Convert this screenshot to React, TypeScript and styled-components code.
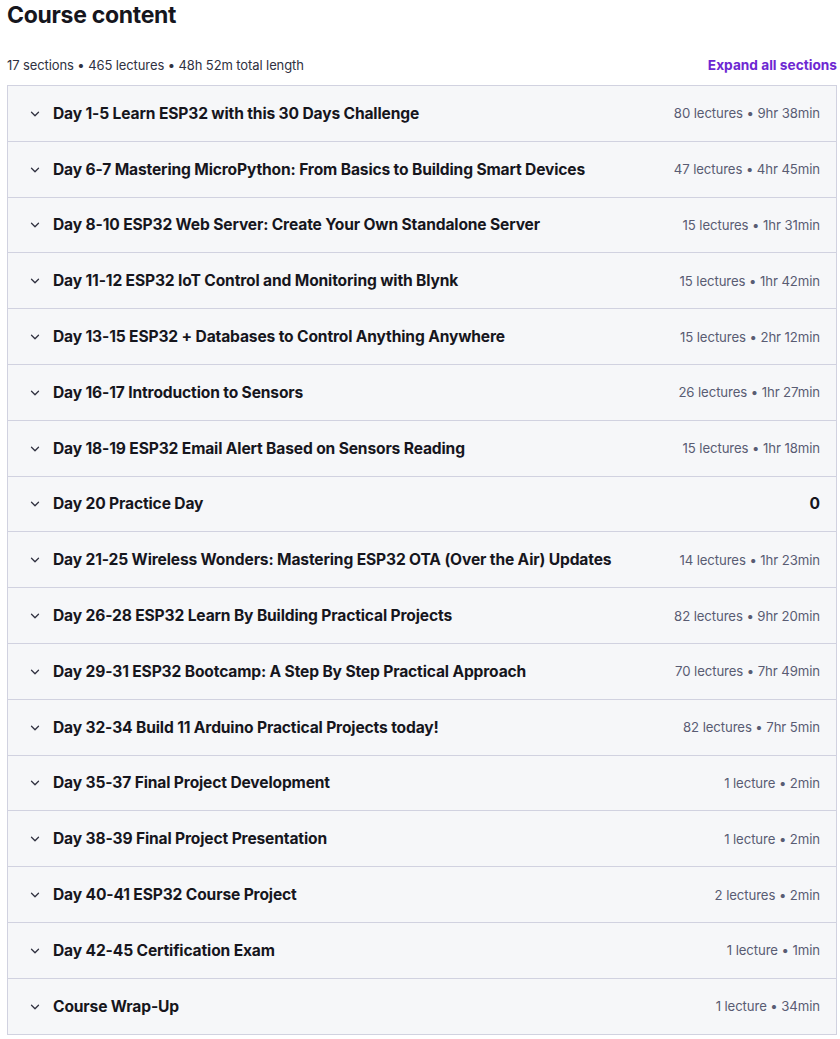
import React from 'react';
import styled, { createGlobalStyle } from 'styled-components';

const GlobalStyle = createGlobalStyle`
  body {
    margin: 0;
    background: #ffffff;
    font-family: Inter, "Noto Sans", sans-serif;
    color: #2a2b3f;
  }
`;

const Page = styled.div`
  padding: 0 3px 0 7px;
`;

const Title = styled.h2`
  margin: 0;
  padding-top: 1px;
  font-size: 23px;
  line-height: 28px;
  font-weight: 700;
  letter-spacing: -0.3px;
  color: #16161d;
`;

const Summary = styled.div`
  display: flex;
  justify-content: space-between;
  align-items: center;
  margin-top: 24px;
  height: 24px;
`;

const Stats = styled.span`
  font-size: 13px;
  color: #303141;
  letter-spacing: -0.1px;
`;

const ExpandAll = styled.button`
  border: 0;
  background: none;
  padding: 0;
  font-family: inherit;
  font-size: 13.7px;
  font-weight: 700;
  color: #6d28d2;
  cursor: pointer;
`;

const Accordion = styled.div`
  margin-top: 8px;
  border: 1px solid #d1d2e0;
  border-bottom: 0;
  width: 828px;
`;

const SectionRow = styled.div`
  display: flex;
  align-items: center;
  height: 54.8px;
  padding: 0 16px 0 22px;
  background: #f6f7f9;
  border-bottom: 1px solid #d1d2e0;
  cursor: pointer;
`;

const Chevron = styled.span`
  display: flex;
  width: 10px;
  margin: 1px 13px 0 0;
  color: #303141;
`;

const SectionTitle = styled.span`
  flex: 1;
  font-size: 15.6px;
  font-weight: 700;
  letter-spacing: -0.15px;
  color: #16161d;
`;

const SectionMeta = styled.span<{ $empty?: boolean }>`
  font-size: ${p => (p.$empty ? '15.6px' : '13.2px')};
  font-weight: ${p => (p.$empty ? 700 : 400)};
  color: ${p => (p.$empty ? '#16161d' : '#595c73')};
  letter-spacing: -0.1px;
`;

const sections: Array<[string, string]> = [
  ['Day 1-5 Learn ESP32 with this 30 Days Challenge', '80 lectures • 9hr 38min'],
  ['Day 6-7 Mastering MicroPython: From Basics to Building Smart Devices', '47 lectures • 4hr 45min'],
  ['Day 8-10 ESP32 Web Server: Create Your Own Standalone Server', '15 lectures • 1hr 31min'],
  ['Day 11-12 ESP32 IoT Control and Monitoring with Blynk', '15 lectures • 1hr 42min'],
  ['Day 13-15 ESP32 + Databases to Control Anything Anywhere', '15 lectures • 2hr 12min'],
  ['Day 16-17 Introduction to Sensors', '26 lectures • 1hr 27min'],
  ['Day 18-19 ESP32 Email Alert Based on Sensors Reading', '15 lectures • 1hr 18min'],
  ['Day 20 Practice Day', '0'],
  ['Day 21-25 Wireless Wonders: Mastering ESP32 OTA (Over the Air) Updates', '14 lectures • 1hr 23min'],
  ['Day 26-28 ESP32 Learn By Building Practical Projects', '82 lectures • 9hr 20min'],
  ['Day 29-31 ESP32 Bootcamp: A Step By Step Practical Approach', '70 lectures • 7hr 49min'],
  ['Day 32-34 Build 11 Arduino Practical Projects today!', '82 lectures • 7hr 5min'],
  ['Day 35-37 Final Project Development', '1 lecture • 2min'],
  ['Day 38-39 Final Project Presentation', '1 lecture • 2min'],
  ['Day 40-41 ESP32 Course Project', '2 lectures • 2min'],
  ['Day 42-45 Certification Exam', '1 lecture • 1min'],
  ['Course Wrap-Up', '1 lecture • 34min'],
];

const ChevronDown = () => (
  <svg width="10" height="6" viewBox="0 0 10 6" fill="none">
    <path d="M1.5 1.2l3.5 3.5 3.5-3.5" stroke="currentColor" strokeWidth="1.3" strokeLinecap="round" strokeLinejoin="round" />
  </svg>
);

export default function App() {
  return (
    <Page>
      <GlobalStyle />
      <Title>Course content</Title>
      <Summary>
        <Stats>17 sections • 465 lectures • 48h 52m total length</Stats>
        <ExpandAll>Expand all sections</ExpandAll>
      </Summary>
      <Accordion>
        {sections.map(([title, meta]) => (
          <SectionRow key={title}>
            <Chevron>
              <ChevronDown />
            </Chevron>
            <SectionTitle>{title}</SectionTitle>
            <SectionMeta $empty={meta === '0'}>{meta}</SectionMeta>
          </SectionRow>
        ))}
      </Accordion>
    </Page>
  );
}
